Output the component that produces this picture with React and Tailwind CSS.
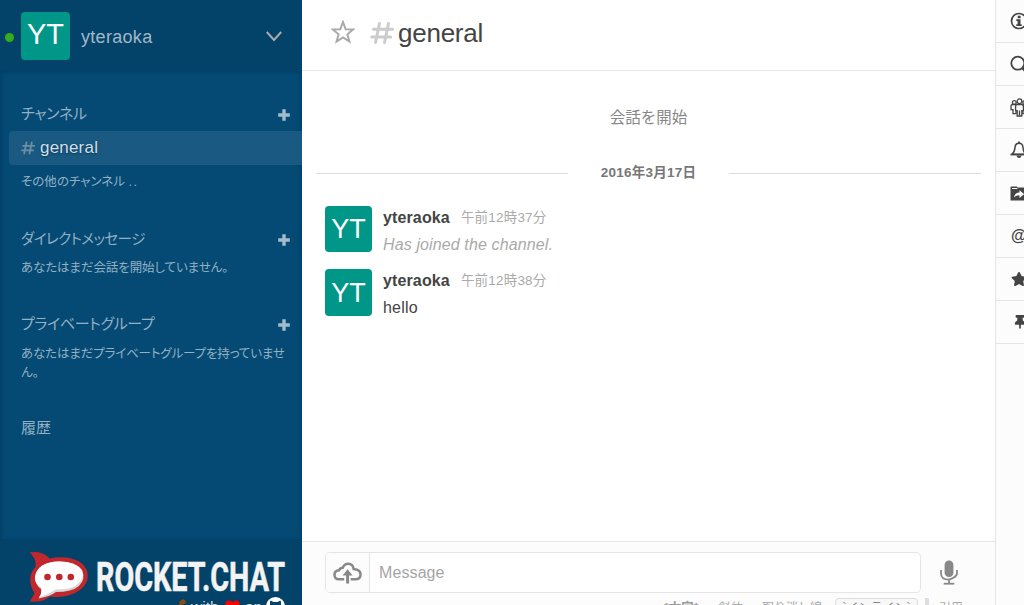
import React from "react";
import { FaStar, FaThumbtack } from "react-icons/fa";

const jp = "font-['Liberation_Sans','Noto_Sans_CJK_JP',sans-serif]";

function Plus() {
  return (
    <svg className="mt-[2px] h-3 w-3" viewBox="0 0 12 12" fill="#a3bccb">
      <path d="M4.3 0.3h3.4v4h4.1v3.4H7.700v4.1H4.3V7.700H0.2V4.3h4.1z" />
    </svg>
  );
}

function Avatar({ className }) {
  return (
    <div className={"flex shrink-0 items-center justify-center rounded bg-[#009688] text-white " + className}>
      <span>YT</span>
    </div>
  );
}

function Hash({ className }) {
  return (
    <svg className={className} viewBox="0 0 24 24" fill="none" stroke="currentColor" strokeWidth="3" strokeLinecap="round">
      <path d="M9.5 2.5L5.5 21.5M18.5 2.5L14.5 21.5M3.5 8.2h19M1.7 16h19" />
    </svg>
  );
}

function SectionTitle({ children, track, plus = true }) {
  return (
    <div className="flex h-5 items-center justify-between pl-[21px] pr-[12px]">
      <h3 className={"whitespace-nowrap leading-5 text-[#94b0c1] " + track}>{children}</h3>
      {plus && <Plus />}
    </div>
  );
}

function Message({ time, children, muted, avatar, gap }) {
  return (
    <div className={"flex items-start pl-[23px] " + gap}>
      <Avatar className={"w-[47px] text-[27px] " + avatar} />
      <div className="ml-[11px] mt-[1px]">
        <div className="flex h-[22px] items-center">
          <span className="text-[16px] font-bold tracking-[0.13px] text-[#444]">yteraoka</span>
          <span className="ml-[11px] text-[13.5px] tracking-[0.2px] text-[#aaa]">{time}</span>
        </div>
        <div className={"mt-[5px] h-[22px] text-[16px] leading-[22px] " + (muted ? "italic text-[#aaa] tracking-[0.12px]" : "text-[#444] tracking-[0.2px]")}>
          {children}
        </div>
      </div>
    </div>
  );
}

function InfoIcon() {
  return (
    <svg className="h-[18px] w-[18px]" viewBox="0 0 18 18" fill="none" stroke="#444" strokeWidth="1.7">
      <circle cx="9" cy="9" r="7.5" />
      <path fill="#444" stroke="none" d="M7.700 3.8h2.900v2.400H7.700zM6.300 7.300h4.200v5h1.200v1.600H6.300v-1.600h1.300V8.900H6.300z" />
    </svg>
  );
}

function SearchIcon() {
  return (
    <svg className="h-[18px] w-[18px]" viewBox="0 0 18 18" fill="none" stroke="#444">
      <circle cx="7.800" cy="8.200" r="6.500" strokeWidth="1.800" />
      <path d="M12.400 12.800l3.600 3.600" strokeWidth="2.800" />
    </svg>
  );
}

function PeopleIcon() {
  return (
    <svg className="h-[19px] w-[19px]" viewBox="0 0 19 19" fill="#fcfcfc" stroke="#444" strokeWidth="1.3">
      <circle cx="4.3" cy="4.6" r="1.900" />
      <circle cx="14.700" cy="4.600" r="1.900" />
      <path d="M1 8.200q0-1.700 1.700-1.700h3.400v9.200H3v-4H1zM18 8.200q0-1.700-1.700-1.700h-3.400v9.200H16v-4h2z" />
      <path d="M5.600 8.400q0-1.700 1.700-1.700h4.400q1.700 0 1.700 1.700v4.200h-1.600V18H7.200v-5.400H5.600z" />
      <circle cx="9.500" cy="3.300" r="2.400" />
      <path d="M9.500 12.500V18" />
    </svg>
  );
}

function BellIcon() {
  return (
    <svg className="h-[18px] w-[18px]" viewBox="0 0 18 18" fill="none" stroke="#444" strokeWidth="1.500">
      <path d="M9 2.300Q5.300 2.300 5 6.500q-.3 4.800-3.300 7h14.600q-3-2.200-3.300-7Q12.700 2.300 9 2.300z" />
      <path d="M1.200 13.400h15.600M9 .5v2" strokeWidth="1.800" />
      <path d="M6.500 14.500h5Q11 17 9 17t-2.500-2.500z" fill="#444" stroke="none" />
    </svg>
  );
}

function FolderIcon() {
  return (
    <svg className="h-[15px] w-[19px]" viewBox="0 0 19 15" fill="#444">
      <path d="M.5 14.500v-13q0-1 1-1h5q1 0 1 1h9.500q1.500 0 1.500 1.500v11.500z" />
      <path d="M2 2h5l.8 1H2z" fill="#fcfcfc" />
      <path d="M4 11.400q.8-4.800 5.500-4.800V4.300l4.600 3.800-4.600 3.800V9.400Q6 9.100 4 11.400z" fill="#fff" />
    </svg>
  );
}

function CloudUpload() {
  return (
    <svg className="h-[22px] w-[29px]" viewBox="0 0 29 22" fill="none" stroke="#888" strokeWidth="2.500">
      <path d="M11.200 17.200H6q-4.500 0-4.500-4.500 0-4 4.600-4.400Q7.200 5.800 9.700 5.800 11.400 1.800 15.200 1.800q4.500 0 5.500 5.200 6.800.5 6.800 5.400 0 4.800-5 4.800h-4.800" />
      <path d="M14.600 21.500v-10" strokeWidth="3" />
      <path d="M14.600 7.200l5 6.200h-10z" fill="#888" stroke="none" />
    </svg>
  );
}

function Mic() {
  return (
    <svg className="h-[25px] w-[18px]" viewBox="0 0 18 25">
      <rect x="4.600" y="0.500" width="8.800" height="16.500" rx="4.300" fill="#888" />
      <path d="M1 10v3.200Q1 19.600 9 19.600s8-2 8-6.400V10M9 20v3" fill="none" stroke="#888" strokeWidth="1.800" />
      <path d="M3.700 22.800h10.600v1.800H3.700z" fill="#888" />
    </svg>
  );
}

function Logo() {
  return (
    <svg className="block h-[64px] w-[302px] shrink-0" viewBox="0 0 302 64">
      <path d="M29.500 11.500Q42 9 49.500 17.500Q68 14 80 21Q88 26.500 87.800 36Q87 46 75 52Q63 57.500 50 55.500Q42 62 30 60.500L34.500 52Q30 46 30.300 37.500Q31 30 35.500 26Q36.500 17 29.500 11.500Z" fill="#c1272d" />
      <path d="M59 20.500Q76 20.500 82 29.500Q86 38 79 45Q72 51 56 51Q50 55.500 38.500 57.500Q42 53 41 48Q35 43.500 35 36.500Q37 21 59 20.500Z" fill="#d5d5d5" />
      <path d="M59 20.500Q76 20.500 82 29Q85 37 78 43Q71 49 56 48.500Q48 53.500 39 56.500Q42.500 52 41.500 47Q35 43 35 36.500Q37 21 59 20.500Z" fill="#fff" />
      <g fill="#c1272d">
        <circle cx="47.500" cy="36" r="3.300" />
        <circle cx="59.300" cy="36" r="3.300" />
        <circle cx="70.800" cy="36" r="3.300" />
      </g>
      <text x="96" y="50" textLength="189" lengthAdjust="spacingAndGlyphs" fontFamily="Roboto, sans-serif" fontWeight="700" fontSize="41.500" fill="#f3f3f3" stroke="#f3f3f3" strokeWidth="0.600">ROCKET.CHAT</text>
    </svg>
  );
}

function Sidebar() {
  return (
    <aside className="flex w-[302px] shrink-0 flex-col bg-[#044a75]">
      <header className="flex h-[71px] shrink-0 items-center bg-[#044369] pl-[5px]">
        <span className="mt-[3px] h-[9px] w-[9px] rounded-full bg-[#35ac19]" />
        <Avatar className="ml-[7px] h-[48px] w-[49px] pb-[2px] text-[29px]" />
        <span className="ml-[11px] mt-[3px] text-[18px] tracking-[0.3px] text-[#a0b9c8]">yteraoka</span>
        <svg className="ml-auto mr-[20px] mt-[1px] h-[11px] w-[16px]" viewBox="0 0 16 11" fill="none" stroke="#aaa" strokeWidth="2">
          <path d="M0.800 1l7.200 8 7.200-8" />
        </svg>
      </header>
      <div className="min-h-0 flex-1 overflow-hidden pt-[33px] shadow-[inset_0_0_4px_#02365b]">
        <SectionTitle track="text-[15px] [font-feature-settings:'palt'] tracking-[-0.3px]">チャンネル</SectionTitle>
        <div className="ml-[9px] mt-[7px] flex h-[34px] items-center rounded-l bg-[#1a5981] pl-[12px] text-[#d1dee6]">
          <Hash className="h-[14px] w-[14px] text-[#6b8fa5]" />
          <span className="ml-[5px] pb-[1px] text-[17px] tracking-[0.2px] [text-shadow:0_1px_2px_#033654]">general</span>
        </div>
        <p className="ml-[21px] mt-[8px] h-[18px] whitespace-nowrap text-[12.500px] leading-[18px] text-[#94b0c1] [font-feature-settings:'palt']">その他のチャンネル <span className="tracking-[1.5px]">..</span></p>
        <div className="h-[38px]" />
        <SectionTitle track="text-[14.500px] [font-feature-settings:'palt'] tracking-[-0.52px]">ダイレクトメッセージ</SectionTitle>
        <p className="ml-[21px] mt-[10px] h-[18px] whitespace-nowrap text-[12.500px] leading-[18px] tracking-[-0.1px] text-[#94b0c1] [font-feature-settings:'palt']">あなたはまだ会話を開始していません。</p>
        <div className="h-[37px]" />
        <SectionTitle track="text-[15px] [font-feature-settings:'palt'] tracking-[-0.35px]">プライベートグループ</SectionTitle>
        <p className="ml-[21px] mt-[11px] h-[38px] whitespace-nowrap text-[12.500px] leading-[19px] tracking-[-0.14px] text-[#94b0c1] [font-feature-settings:'palt']">あなたはまだプライベートグループを持っていませ<br />ん。</p>
        <div className="h-[35px]" />
        <SectionTitle track="text-[15px]" plus={false}>履歴</SectionTitle>
      </div>
      <footer className="flex h-[64px] shrink-0 flex-col overflow-hidden bg-[#044369]">
        <Logo />
        <div className="-mt-[9px] flex h-[22px] shrink-0 items-start justify-end pr-[17px] text-[15.500px] leading-[22px] text-[#cfdbe3]">
          <svg className="mr-[2px] mt-[2px] h-4 w-4" viewBox="0 0 16 16"><path d="M2 11l5-6-1-1 4-3 3 2-1 3-2 0-6 8z" fill="#8e4b10" /></svg>
          <span className="h-[22px] w-[34px]">with</span>
          <svg className="mr-[5px] mt-[4px] h-[14px] w-[15px]" viewBox="0 0 16 14"><path d="M8 14L1 7Q-1 0 4 0q3 0 4 2 1-2 4-2 5 0 3 7z" fill="red" /></svg>
          <span className="h-[22px] w-[21px]">on</span>
          <svg className="mt-[1px] h-[19px] w-[19px]" viewBox="0 0 20 20"><circle cx="10" cy="10" r="10" fill="#fff" /><path d="M4.500 4q2 0 3 1.200h5Q13.500 4 15.500 4q1 6-1 9h-9Q3.500 10 4.500 4z" fill="#044369" /></svg>
        </div>
      </footer>
    </aside>
  );
}

function Composer() {
  return (
    <footer className="h-[64px] shrink-0 overflow-hidden border-t border-[#e7e7e7] bg-[#fcfcfc]">
      <div className="flex items-center pl-[23px] pt-[10px]">
        <div className="flex h-[41px] w-[596px] overflow-hidden rounded-[5px] border border-[#e5e5e5] bg-white">
          <div className="flex w-[44px] items-center justify-center border-r border-[#e5e5e5] bg-[#fcfcfc]"><CloudUpload /></div>
          <span className="ml-[9px] text-[16px] leading-[39px] tracking-[0.1px] text-[#a5a5a5]">Message</span>
        </div>
        <div className="ml-[19px]"><Mic /></div>
      </div>
      <div className="mt-[5px] flex h-[20px] items-start pl-[362px] text-[12.500px] leading-[21px] text-[#aaa]">
        <b className="w-[52px] whitespace-nowrap text-[#999]">*太字*</b>
        <i className="w-[46px] whitespace-nowrap">斜体</i>
        <span className="w-[73px] whitespace-nowrap text-[12px]">取り消し線</span>
        <code className={"flex h-[20px] w-[83px] items-start justify-center whitespace-nowrap rounded border border-[#ddd] bg-[#f8f8f8] text-[12px] leading-[18px] text-[#888] " + jp}>`インライン`</code>
        <span className="ml-[7px] h-5 w-[4px] bg-[#ddd]" />
        <span className="ml-[3px] whitespace-nowrap text-[12px]">&gt;引用</span>
      </div>
    </footer>
  );
}

const tabs = [
  <InfoIcon />,
  <SearchIcon />,
  <PeopleIcon />,
  <BellIcon />,
  <FolderIcon />,
  <span className="ml-[1px] pb-[1px] text-[16px] font-bold leading-none">@</span>,
  <FaStar className="ml-[1px]" size={16} />,
  <FaThumbtack className="ml-[3px]" size={14} />,
];

export default function App() {
  return (
    <div className={"flex h-[605px] w-[1024px] overflow-hidden bg-white " + jp}>
      <Sidebar />
      <main className="flex w-[693px] shrink-0 flex-col">
        <header className="flex h-[71px] shrink-0 items-center border-b border-[#e7e7e7] pl-[29px]">
          <svg className="mt-[-6px] h-[24px] w-[24px]" viewBox="0 0 24 24" fill="none" stroke="#aaa" strokeWidth="2">
            <path d="M12 2l2.700 7.200 7.500.300-5.800 4.800 2 7.300L12 17.500l-6.400 4.100 2-7.300L1.800 9.500l7.500-.300z" />
          </svg>
          <Hash className="ml-[15px] mt-[-5px] h-[24px] w-[24px] text-[#ccc]" />
          <h2 className="ml-[4px] mt-[-4px] text-[26px] tracking-[-0.250px] text-[#444]">general</h2>
        </header>
        <section className="min-h-0 flex-1">
          <p className="mt-[35px] h-[22px] text-center text-[15.500px] leading-[23px] text-[#888]">会話を開始</p>
          <div className="mt-[34px] flex h-[22px] items-center px-[14px]">
            <span className="h-px w-[252px] bg-[#ddd]" />
            <b className="flex-1 text-center text-[13.500px] tracking-[0.25px] text-[#777]">2016年3月17日</b>
            <span className="h-px w-[252px] bg-[#ddd]" />
          </div>
          <Message gap="mt-[22px]" avatar="h-[46px]" time="午前12時37分" muted>Has joined the channel.</Message>
          <Message gap="mt-[13px]" avatar="h-[47px] pt-[1px]" time="午前12時38分">hello</Message>
        </section>
        <Composer />
      </main>
      <aside className="w-[29px] shrink-0 overflow-hidden border-l border-[#e5e5e5] bg-[#fcfcfc] text-[#444]">
        {tabs.map((icon, i) => (
          <div key={i} className="flex h-[43px] w-[43px] items-center border-b border-[#e5e5e5] pl-[14px]">{icon}</div>
        ))}
      </aside>
    </div>
  );
}
